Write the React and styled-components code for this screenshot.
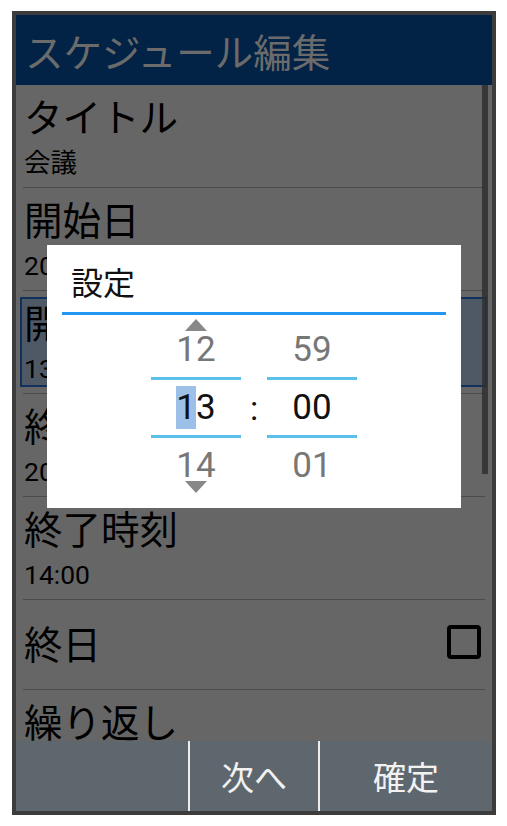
import styled, { createGlobalStyle } from "styled-components";

const Global = createGlobalStyle`
  html, body {
    margin: 0;
    padding: 0;
    background: #fff;
  }
  body {
    font-family: Roboto, "Noto Sans CJK JP", sans-serif;
  }
`;

const Page = styled.div`
  padding: 11px 0 0 12px;
`;

const Phone = styled.div`
  position: relative;
  width: 476px;
  height: 796px;
  border: 4px solid #3c3c3c;
  display: flex;
  flex-direction: column;
  background: #666;
  overflow: hidden;
`;

const Header = styled.div`
  height: 70px;
  flex: none;
  display: flex;
  align-items: center;
  padding-left: 9px;
  background: #022246;
  color: #6b6b6b;
  font-size: 38.5px;
  font-family: "Noto Sans CJK JP", sans-serif;
`;

const List = styled.div`
  position: relative;
  flex: 1;
  overflow: hidden;
`;

const Item = styled.div`
  box-sizing: border-box;
  height: ${(p) => (p.$single ? 77 : 90)}px;
  margin: 6px 5px 6px 4px;
  padding: 0 4px 0 2px;
  border: 2px solid ${(p) => (p.$selected ? "#10305e" : "transparent")};
  background: ${(p) => (p.$selected ? "#4f5966" : "transparent")};
  display: flex;
  flex-direction: ${(p) => (p.$single ? "row" : "column")};
  align-items: ${(p) => (p.$single ? "center" : "flex-start")};
  justify-content: ${(p) => (p.$single ? "space-between" : "flex-start")};
  color: #000;
`;

const Label = styled.div`
  font-size: 38.5px;
  line-height: 48px;
  margin-top: 2px;
`;

const Value = styled.div`
  font-size: 26.5px;
  line-height: 32px;
  margin-top: 4px;
`;

const Divider = styled.div`
  height: 1px;
  margin: 0 7px;
  background: #4b4b4b;
`;

const Checkbox = styled.div`
  box-sizing: border-box;
  width: 34px;
  height: 34px;
  border: 4px solid #000;
  border-radius: 4px;
  margin-top: -6px;
`;

const Scrollbar = styled.div`
  position: absolute;
  top: 0;
  right: 4px;
  width: 6px;
  height: 389px;
  background: rgba(48, 48, 48, 0.85);
`;

const SoftKeys = styled.div`
  height: 70px;
  flex: none;
  display: grid;
  grid-template-columns: 172px 2px 128px 2px 172px;
  background: #5f676e;
`;

const SoftKey = styled.div`
  display: flex;
  align-items: center;
  justify-content: center;
  color: #f2f2f2;
  font-size: 33px;
`;

const KeyDivider = styled.div`
  background: #ececec;
`;

const Dialog = styled.div`
  position: absolute;
  left: 31px;
  top: 230px;
  width: 414px;
  height: 263px;
  background: #fff;
  display: flex;
  flex-direction: column;
`;

const DialogTitle = styled.div`
  height: 67px;
  display: flex;
  align-items: center;
  padding: 4px 0 0 24px;
  box-sizing: border-box;
  font-size: 32px;
  color: #111;
`;

const TitleRule = styled.div`
  height: 3px;
  margin: 0 15px;
  background: #2196f3;
`;

const Picker = styled.div`
  display: flex;
  justify-content: center;
  margin-top: 7px;
`;

const Column = styled.div`
  position: relative;
  width: 90px;
  display: flex;
  flex-direction: column;
`;

const Cell = styled.div`
  height: 55px;
  display: flex;
  align-items: center;
  justify-content: center;
  font-family: Roboto, sans-serif;
  font-size: 35px;
  color: ${(p) => (p.$active ? "#111" : "#777")};
`;

const Rule = styled.div`
  height: 3px;
  background: #5bc1ea;
`;

const Colon = styled.div`
  width: 26px;
  display: flex;
  align-items: center;
  justify-content: center;
  font-family: Roboto, sans-serif;
  font-size: 34px;
  color: #111;
`;

const Arrow = styled.div`
  position: absolute;
  left: 34px;
  ${(p) => (p.$down ? "bottom: 0;" : "top: -3px;")}
  width: 0;
  height: 0;
  border-left: 11px solid transparent;
  border-right: 11px solid transparent;
  ${(p) =>
    p.$down ? "border-top: 12px solid #888;" : "border-bottom: 12px solid #888;"}
`;

const Caret = styled.span`
  display: inline-block;
  height: 43px;
  line-height: 43px;
  background: #9cc0e8;
`;

const items = [
  { label: "タイトル", value: "会議" },
  { label: "開始日", value: "2020/10/21" },
  { label: "開始時刻", value: "13:00", selected: true },
  { label: "終了日", value: "2020/10/21" },
  { label: "終了時刻", value: "14:00" },
];

export default function App() {
  return (
    <Page>
      <Global />
      <Phone>
        <Header>スケジュール編集</Header>
        <List>
          {items.map((it) => (
            <div key={it.label}>
              <Item $selected={it.selected}>
                <Label>{it.label}</Label>
                <Value>{it.value}</Value>
              </Item>
              <Divider />
            </div>
          ))}
          <Item $single>
            <Label>終日</Label>
            <Checkbox />
          </Item>
          <Divider />
          <Item>
            <Label>繰り返し</Label>
            <Value>なし</Value>
          </Item>
          <Scrollbar />
        </List>
        <SoftKeys>
          <SoftKey />
          <KeyDivider />
          <SoftKey>次へ</SoftKey>
          <KeyDivider />
          <SoftKey>確定</SoftKey>
        </SoftKeys>

        <Dialog>
          <DialogTitle>設定</DialogTitle>
          <TitleRule />
          <Picker>
            <Column>
              <Arrow />
              <Cell>12</Cell>
              <Rule />
              <Cell $active>
                <Caret>1</Caret>3
              </Cell>
              <Rule />
              <Cell>14</Cell>
              <Arrow $down />
            </Column>
            <Colon>:</Colon>
            <Column>
              <Cell>59</Cell>
              <Rule />
              <Cell $active>00</Cell>
              <Rule />
              <Cell>01</Cell>
            </Column>
          </Picker>
        </Dialog>
      </Phone>
    </Page>
  );
}
